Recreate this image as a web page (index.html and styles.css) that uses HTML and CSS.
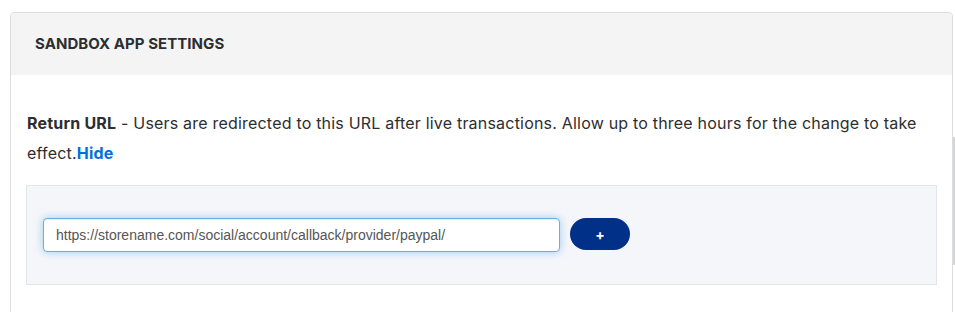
FILE: index.html
```html
<!DOCTYPE html>
<html lang="en">
<head>
  <meta charset="UTF-8" />
  <meta name="viewport" content="width=device-width, initial-scale=1.0"/>
  <title>Sandbox App Settings</title>
  <link rel="stylesheet" href="styles.css">
</head>
<body>
  <div class="card">
    <div class="card-header">Sandbox App Settings</div>
    <div class="card-body">
      <p class="help"><strong>Return URL</strong> - Users are redirected to this URL after live transactions. Allow up to three hours for the change to take effect.<a href="#" class="toggle">Hide</a></p>
      <div class="url-box">
        <input type="text" class="url-input" value="https://storename.com/social/account/callback/provider/paypal/" />
        <button class="add-btn">+</button>
      </div>
    </div>
  </div>
  <div class="side-bar"></div>
</body>
</html>
```

FILE: styles.css
```css
body {
  margin: 12px 2px 0 10px;
  background-color: #fff;
  font-family: 'Inter', 'Liberation Sans', sans-serif;
  color: #2c2e2f;
}

.card {
  border: 1px solid #ddd;
  border-radius: 4px;
  min-height: 320px;
}

.card-header {
  background-color: #f4f4f4;
  padding: 20px 24px;
  height: 22px;
  line-height: 22px;
  font-size: 15px;
  font-weight: 700;
  text-transform: uppercase;
  letter-spacing: 0.05px;
  color: #2c2e2f;
  border-radius: 4px 4px 0 0;
}

.card-body {
  padding: 33px 15px 20px 15px;
}

.help {
  margin: 0 0 17px;
  font-size: 16px;
  line-height: 30px;
  letter-spacing: 0.2px;
  padding-left: 1px;
}

.help strong {
  font-weight: 700;
}

.toggle {
  color: #0070e0;
  font-weight: 700;
  text-decoration: none;
}

.url-box {
  display: flex;
  align-items: flex-start;
  gap: 10px;
  background-color: #f5f6fa;
  border: 1px solid #e3e5ea;
  padding: 32px 16px;
}

.url-input {
  box-sizing: border-box;
  width: 517px;
  height: 34px;
  padding: 6px 12px;
  font-family: 'Liberation Sans', Arial, sans-serif;
  font-size: 14px;
  color: #555;
  background-color: #fff;
  border: 1px solid #66afe9;
  border-radius: 4px;
  box-shadow: inset 0 1px 1px rgba(0,0,0,.075), 0 0 8px rgba(102,175,233,.6);
  outline: none;
}

.add-btn {
  width: 60px;
  height: 32px;
  border: none;
  border-radius: 16px;
  background-color: #003087;
  color: #fff;
  font-family: 'Inter', sans-serif;
  font-size: 14px;
  font-weight: 700;
  cursor: pointer;
}

.side-bar {
  position: absolute;
  top: 137px;
  left: 953px;
  width: 2px;
  height: 128px;
  background-color: #d3d6d9;
}
```
